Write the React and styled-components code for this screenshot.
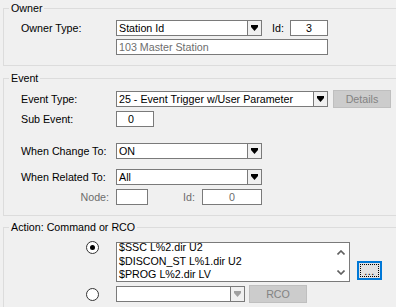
import React from 'react';
import styled, { createGlobalStyle } from 'styled-components';

const GlobalStyle = createGlobalStyle`
  html, body {
    margin: 0;
    padding: 0;
    background: #f0f0f0;
    overflow: hidden;
  }
  body {
    font-family: "Liberation Sans", Arial, sans-serif;
    font-size: 10.7px;
    color: #000;
  }
`;

const Page = styled.div`
  width: 396px;
  height: 307px;
  padding-top: 2px;
  box-sizing: border-box;
  overflow: hidden;
`;

const Group = styled.fieldset`
  width: 420px;
  margin: ${({ $mt }) => $mt || 0}px 0 0 3px;
  padding: ${({ $pt }) => $pt}px 0 ${({ $pb }) => $pb}px 0;
  border: 1px solid #dcdcdc;
  box-sizing: border-box;
  min-width: 0;
`;

const Legend = styled.legend`
  margin-left: 5px;
  padding: 0 2px;
  line-height: 12px;
  height: 12px;
`;

const Row = styled.div`
  display: flex;
  align-items: center;
  height: 16px;
  margin-top: ${({ $mt }) => $mt || 0}px;
  padding-left: ${({ $pl }) => ($pl === undefined ? 17 : $pl)}px;
`;

const TopRow = styled(Row)`
  align-items: flex-start;
  height: auto;
`;

const Label = styled.div`
  width: ${({ $w }) => $w || 95}px;
  flex: none;
  box-sizing: border-box;
  white-space: nowrap;
  color: ${({ $disabled }) => ($disabled ? '#6d6d6d' : '#000')};
  text-align: ${({ $right }) => ($right ? 'right' : 'left')};
  padding-right: ${({ $right }) => ($right ? 7 : 0)}px;
  margin-left: ${({ $ml }) => $ml || 0}px;
`;

const TextBox = styled.div`
  width: ${({ $w }) => $w}px;
  height: 16px;
  flex: none;
  box-sizing: border-box;
  border: 1px solid #7a7a7a;
  background: #fff;
  line-height: 14px;
  padding-left: ${({ $pl }) => ($pl === undefined ? 2 : $pl)}px;
  text-align: ${({ $center }) => ($center ? 'center' : 'left')};
  color: ${({ $disabled }) => ($disabled ? '#6d6d6d' : '#000')};
  white-space: nowrap;
  overflow: hidden;
`;

const Combo = styled.div`
  display: flex;
  width: ${({ $w }) => $w}px;
  height: 16px;
  flex: none;
  box-sizing: border-box;
  border: 1px solid #7a7a7a;
  background: #fff;
`;

const ComboText = styled.div`
  flex: 1;
  padding-left: 2px;
  line-height: 14px;
  white-space: nowrap;
  overflow: hidden;
`;

const ComboButton = styled.div`
  width: 14px;
  flex: none;
  box-sizing: border-box;
  border-left: 1px solid #7a7a7a;
  background: #f0f0f0;
  display: flex;
  align-items: center;
  justify-content: center;
`;

const PushButton = styled.div`
  width: ${({ $w }) => $w}px;
  height: ${({ $h }) => $h}px;
  flex: none;
  box-sizing: border-box;
  margin-left: ${({ $ml }) => $ml || 0}px;
  border: 1px solid #bfbfbf;
  background: #cccccc;
  color: #838383;
  display: flex;
  align-items: center;
  justify-content: center;
`;

const FocusButton = styled.div`
  width: 25px;
  height: 19px;
  flex: none;
  box-sizing: border-box;
  margin: 19px 0 0 7px;
  border: 2px solid #0078d7;
  background: #e1e1e1;
  padding: 1px;
`;

const FocusRect = styled.div`
  height: 100%;
  box-sizing: border-box;
  border: 1px dotted #000;
  display: flex;
  align-items: flex-end;
  justify-content: center;
  line-height: 9px;
  letter-spacing: 0.5px;
`;

const RadioSlot = styled.div`
  width: 30px;
  flex: none;
  display: flex;
  align-items: center;
  height: ${({ $h }) => $h || 16}px;
`;

const RadioCircle = styled.div`
  width: 13px;
  height: 13px;
  box-sizing: border-box;
  border-radius: 50%;
  border: 1px solid #333;
  background: #fff;
  display: flex;
  align-items: center;
  justify-content: center;
  margin-top: ${({ $mt }) => $mt || 0}px;

  &::after {
    content: '';
    width: 5px;
    height: 5px;
    border-radius: 50%;
    background: ${({ $checked }) => ($checked ? '#000' : 'transparent')};
  }
`;

const MemoBox = styled.div`
  display: flex;
  width: 234px;
  height: 40px;
  flex: none;
  box-sizing: border-box;
  border: 1px solid #7a7a7a;
  background: #fff;
`;

const MemoLines = styled.div`
  flex: 1;
  padding-left: 2px;
  line-height: 13.5px;
  margin-top: -2px;
  white-space: nowrap;
  overflow: hidden;
`;

const ScrollColumn = styled.div`
  width: 16px;
  flex: none;
  display: flex;
  flex-direction: column;
  align-items: center;
  justify-content: space-between;
  padding: 7px 0 6px;
  box-sizing: border-box;
`;

const Arrow = ({ color = '#000' }) => (
  <svg width="7" height="6" viewBox="0 0 7 6">
    <polygon points="0,0 7,0 7,2 3.5,6 0,2" fill={color} />
  </svg>
);

const Chevron = ({ up }) => (
  <svg width="8" height="5" viewBox="0 0 8 5">
    <polyline
      points={up ? '0.5,4.5 4,1 7.5,4.5' : '0.5,0.5 4,4 7.5,0.5'}
      fill="none"
      stroke="#606060"
      strokeWidth="1.6"
    />
  </svg>
);

const ComboBox = ({ w, text, disabled }) => (
  <Combo $w={w}>
    <ComboText>{text}</ComboText>
    <ComboButton>
      <Arrow color={disabled ? '#a0a0a0' : '#000'} />
    </ComboButton>
  </Combo>
);

export default function App() {
  return (
    <Page>
      <GlobalStyle />

      <Group $pt={6} $pb={10}>
        <Legend>Owner</Legend>
        <Row>
          <Label>Owner Type:</Label>
          <ComboBox w={146} text="Station Id" />
          <Label $w={18} $ml={10}>Id:</Label>
          <TextBox $w={38} $center $pl={0}>3</TextBox>
        </Row>
        <Row $mt={3}>
          <Label />
          <TextBox $w={212} $disabled>103 Master Station</TextBox>
        </Row>
      </Group>

      <Group $mt={6} $pt={7} $pb={10}>
        <Legend>Event</Legend>
        <Row>
          <Label>Event Type:</Label>
          <ComboBox w={212} text="25 - Event Trigger w/User Parameter" />
          <PushButton $w={58} $h={18} $ml={5}>Details</PushButton>
        </Row>
        <Row $mt={4}>
          <Label>Sub Event:</Label>
          <TextBox $w={38} $pl={11}>0</TextBox>
        </Row>
        <Row $mt={16}>
          <Label>When Change To:</Label>
          <ComboBox w={146} text="ON" />
        </Row>
        <Row $mt={10}>
          <Label>When Related To:</Label>
          <ComboBox w={146} text="All" />
        </Row>
        <Row $mt={4}>
          <Label $right $disabled>Node:</Label>
          <TextBox $w={32} />
          <Label $w={54} $right $disabled>Id:</Label>
          <TextBox $w={60} $center $pl={0} $disabled>0</TextBox>
        </Row>
      </Group>

      <Group $mt={5} $pt={9} $pb={10}>
        <Legend>Action: Command or RCO</Legend>
        <TopRow $pl={82}>
          <RadioSlot $h={12}>
            <RadioCircle $checked $mt={-1} />
          </RadioSlot>
          <MemoBox>
            <MemoLines>
              <div>$SSC L%2.dir U2</div>
              <div>$DISCON_ST L%1.dir U2</div>
              <div>$PROG L%2.dir LV</div>
            </MemoLines>
            <ScrollColumn>
              <Chevron up />
              <Chevron />
            </ScrollColumn>
          </MemoBox>
          <FocusButton>
            <FocusRect>...</FocusRect>
          </FocusButton>
        </TopRow>
        <Row $mt={4} $pl={82}>
          <RadioSlot>
            <RadioCircle />
          </RadioSlot>
          <ComboBox w={129} text="" disabled />
          <PushButton $w={58} $h={18} $ml={4}>RCO</PushButton>
        </Row>
      </Group>
    </Page>
  );
}
